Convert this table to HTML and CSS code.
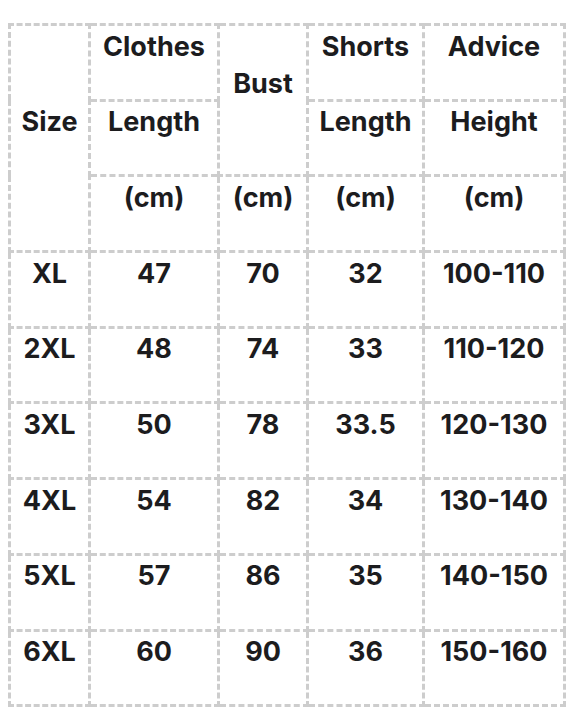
FILE: index.html
```html
<!DOCTYPE html>
<html>
<head>
<meta charset="utf-8">
<link rel="stylesheet" href="styles.css">
</head>
<body>
<table class="size-table">
  <colgroup>
    <col class="c-size">
    <col class="c-clothes">
    <col class="c-bust">
    <col class="c-shorts">
    <col class="c-advice">
  </colgroup>
  <tbody>
    <tr>
      <td rowspan="3">Size</td>
      <td>Clothes</td>
      <td rowspan="2">Bust</td>
      <td>Shorts</td>
      <td>Advice</td>
    </tr>
    <tr>
      <td>Length</td>
      <td>Length</td>
      <td>Height</td>
    </tr>
    <tr>
      <td>(cm)</td>
      <td>(cm)</td>
      <td>(cm)</td>
      <td>(cm)</td>
    </tr>
    <tr><td>XL</td><td>47</td><td>70</td><td>32</td><td>100-110</td></tr>
    <tr><td>2XL</td><td>48</td><td>74</td><td>33</td><td>110-120</td></tr>
    <tr><td>3XL</td><td>50</td><td>78</td><td>33.5</td><td>120-130</td></tr>
    <tr><td>4XL</td><td>54</td><td>82</td><td>34</td><td>130-140</td></tr>
    <tr><td>5XL</td><td>57</td><td>86</td><td>35</td><td>140-150</td></tr>
    <tr><td>6XL</td><td>60</td><td>90</td><td>36</td><td>150-160</td></tr>
  </tbody>
</table>
</body>
</html>
```

FILE: styles.css
```css
html, body {
  background: #ffffff;
}
body {
  margin: 23px 8px 8px;
  font-family: Inter, "Noto Sans", sans-serif;
  color: #1c1c1e;
}
.size-table {
  border-collapse: collapse;
  table-layout: fixed;
  width: 555px;
}
.c-size { width: 80px; }
.c-clothes { width: 129px; }
.c-bust { width: 89px; }
.c-shorts { width: 116px; }
.c-advice { width: 141px; }
.size-table td {
  border: 3px dashed #cdcdcd;
  padding: 3.5px 0 35.2px;
  line-height: 34px;
  font-size: 27px;
  font-weight: 700;
  text-align: center;
  vertical-align: middle;
  white-space: nowrap;
}
```
